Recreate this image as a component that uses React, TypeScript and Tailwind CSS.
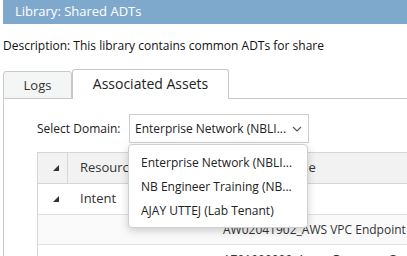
import React from "react";

const Tri = () => (
  <svg width="6" height="6" viewBox="0 0 6 6" className="block">
    <polygon points="6,0 6,6 0,6" fill="#333" />
  </svg>
);

export default function App() {
  return (
    <div
      className="relative w-[407px] h-[256px] overflow-hidden bg-white text-[#222]"
      style={{ fontFamily: '"Open Sans", "Noto Sans", sans-serif' }}
    >
      <div className="ml-[3px] h-[24px] bg-[#7fa9cc] pl-[12px] flex items-center text-white text-[13px]">
        Library: Shared ADTs
      </div>
      <div className="h-[45px] pt-[14px] pl-[3px] text-[12px] leading-[16px] text-[#111]">
        Description: This library contains common ADTs for share
      </div>
      <div className="ml-[3px] flex items-end h-[30px]">
        <div className="w-[69px] h-[28px] bg-[#f4f6f6] border border-[#c8c8c8] rounded-t-[3px] flex items-center justify-center text-[13px] text-[#333] pt-[2px]">
          Logs
        </div>
        <div className="w-[157px] h-[30px] bg-white border border-b-0 border-[#c8c8c8] rounded-t-[3px] flex items-center justify-center text-[14px] text-[#222] pb-[2px]">
          Associated Assets
        </div>
        <div className="flex-1 h-[1px] bg-[#c8c8c8]" />
      </div>
      <div className="ml-[3px] border-l border-[#c8c8c8] h-[200px] pt-[15px] pl-[33px]">
        <div className="flex items-center">
          <span className="text-[12px] text-[#222] w-[92px]">Select Domain:</span>
          <div className="w-[180px] h-[29px] border border-[#cfcfcf] flex items-center pl-[5px] pr-[6px] text-[12px] text-[#222]">
            <span className="flex-1">Enterprise Network (NBLI...</span>
            <svg width="10" height="6" viewBox="0 0 10 6">
              <polyline points="1,1 5,5 9,1" fill="none" stroke="#555" strokeWidth="1.1" />
            </svg>
          </div>
        </div>
        <div className="mt-[9px] border-l border-t border-[#d6d6d6] text-[13px] text-[#333]">
          <div className="h-[31px] bg-[#f2f2f2] border-b border-[#d6d6d6] flex items-center">
            <div className="w-[30px] h-full border-r border-[#d6d6d6] flex items-center pl-[15px]">
              <Tri />
            </div>
            <div className="w-[148px] pl-[12px]">Resource Type</div>
            <div className="flex-1 pl-[4px]">Resource Name</div>
          </div>
          <div className="h-[31px] border-b border-[#e2e2e2] flex items-center">
            <div className="w-[30px] flex items-center pl-[15px]">
              <Tri />
            </div>
            <div className="pl-[12px]">Intent</div>
          </div>
          <div className="h-[30px] border-b border-[#e2e2e2] bg-[#fafafa] flex items-center pl-[185px] whitespace-nowrap text-[12px]">
            AW02041902_AWS VPC Endpoint
          </div>
          <div className="h-[30px] flex items-center pl-[185px] whitespace-nowrap text-[12px]">
            AZ01000000_Azure Resource Group
          </div>
        </div>
      </div>
      <div className="absolute left-[128px] top-[144px] w-[180px] h-[84px] bg-white border border-[#cfcfcf] rounded-[4px] shadow-[0_3px_8px_rgba(0,0,0,0.18)] pt-[6px] text-[12px] text-[#222]">
        <div className="h-[24px] flex items-center pl-[12px]">Enterprise Network (NBLI...</div>
        <div className="h-[24px] flex items-center pl-[12px]">NB Engineer Training (NB...</div>
        <div className="h-[24px] flex items-center pl-[12px]">AJAY UTTEJ (Lab Tenant)</div>
      </div>
    </div>
  );
}
